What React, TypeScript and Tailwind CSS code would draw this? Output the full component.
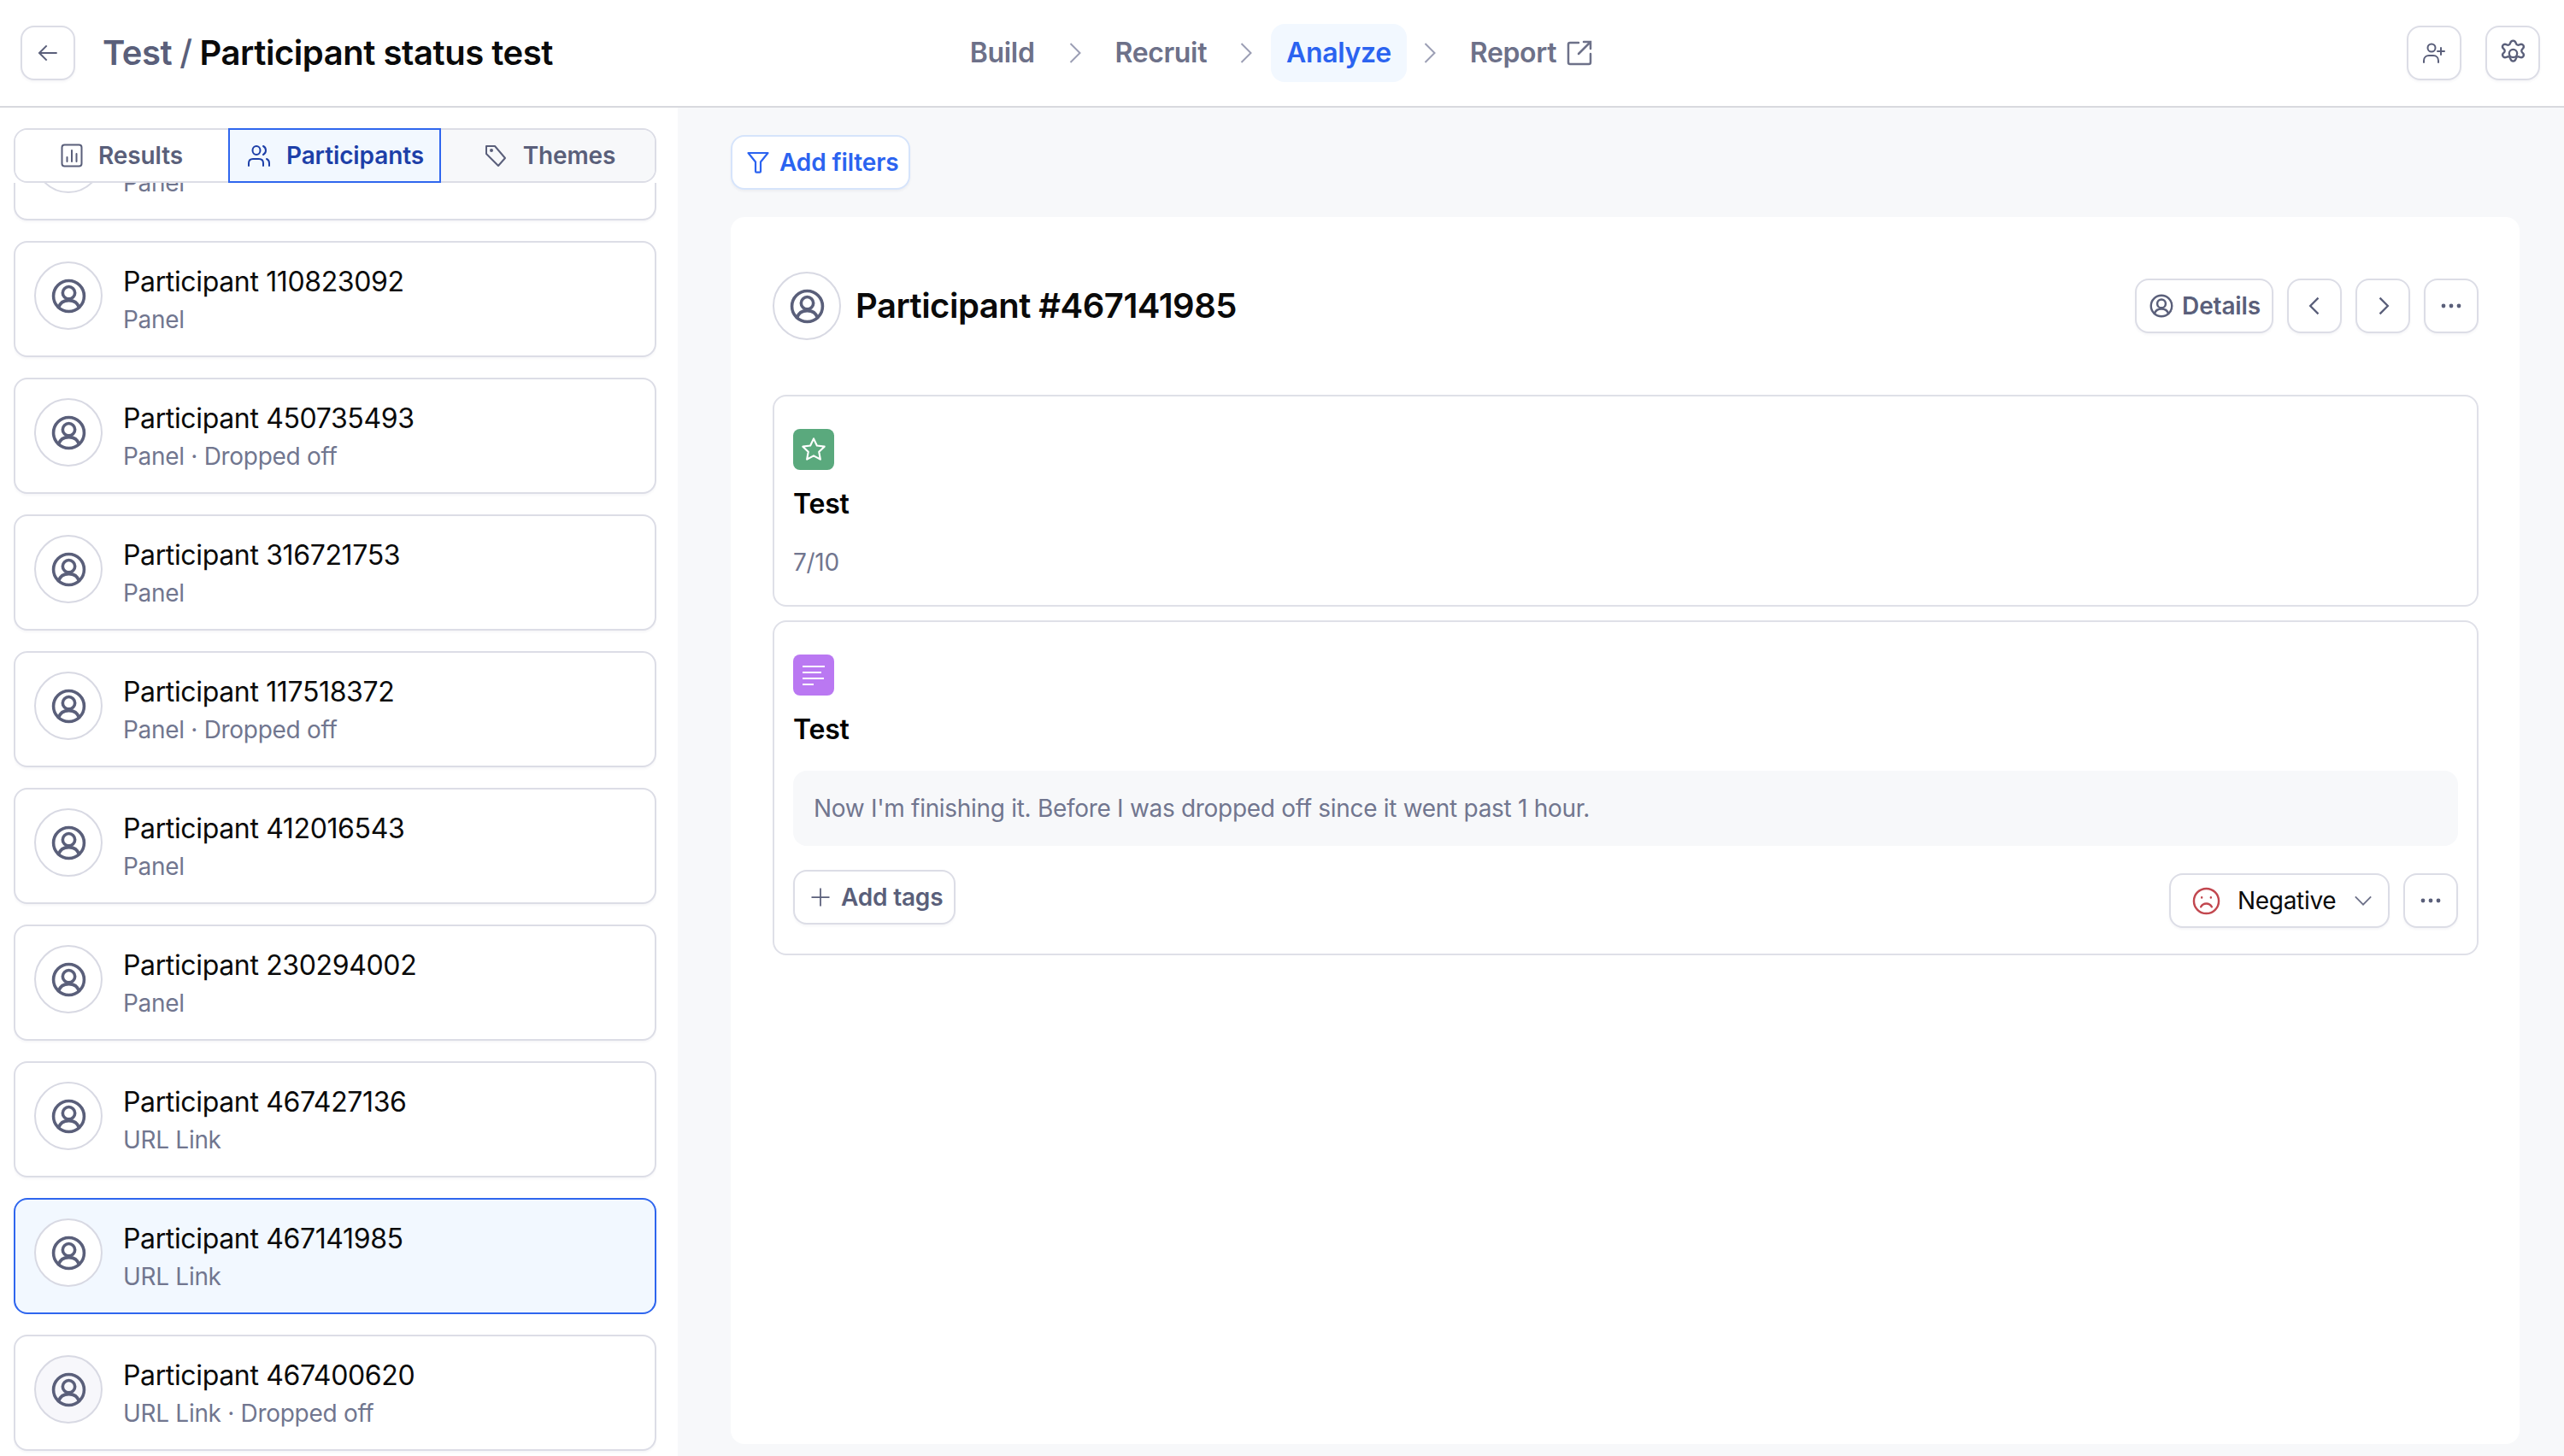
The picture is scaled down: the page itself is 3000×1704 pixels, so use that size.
import React from "react";

const Person = ({ className = "w-[41px] h-[41px]" }: { className?: string }) => (
  <svg viewBox="0 0 24 24" fill="none" stroke="currentColor" strokeWidth="2.100" strokeLinecap="round" strokeLinejoin="round" className={className}>
    <circle cx="12" cy="12" r="10.500" />
    <circle cx="12" cy="9.800" r="4.200" />
    <path d="M5 19.800c1-3.200 3.600-4.800 7-4.800s6 1.600 7 4.800" />
  </svg>
);

const Chevron = () => (
  <svg viewBox="0 0 14 24" fill="none" stroke="currentColor" strokeWidth="2" className="h-[24px] w-[14px] text-[#9b9eb4]">
    <path d="M1.500 1 L12.500 12 L1.500 23" />
  </svg>
);

const Dots = () => (
  <svg viewBox="0 0 24 24" fill="#5a5f7a" className="h-6 w-6">
    <circle cx="3" cy="12" r="2.400" />
    <circle cx="12" cy="12" r="2.400" />
    <circle cx="21" cy="12" r="2.400" />
  </svg>
);

const btn = "flex items-center justify-center rounded-[16px] border-2 border-[#dcdde6] bg-white shadow-[0_2px_3px_rgba(30,35,70,0.04)]";

function Card({ name, sub, active, gray }: { name: string; sub: string; active?: boolean; gray?: boolean }) {
  return (
    <div
      className={
        "flex h-[136px] shrink-0 items-start rounded-[16px] border-2 pl-[22px] pt-[22px] " +
        (active ? "border-[#2f66ee] bg-[#f2f8ff]" : "border-[#dcdde6] bg-white shadow-[0_2px_3px_rgba(30,35,70,0.04)]")
      }
    >
      <div className={"flex h-[80px] w-[80px] items-center justify-center rounded-full border-2 border-[#d8d9e3] text-[#5a5f7a] " + (active ? "bg-white" : gray ? "bg-[#f7f7fb]" : "bg-white")}>
        <Person />
      </div>
      <div className="ml-[24px] flex flex-col pt-[2px]">
        <span className="h-[44px] text-[32px] leading-[44px] tracking-[-0.36px] text-[#0a0a0a]">{name}</span>
        <span className="text-[28px] leading-[44px] tracking-[-0.3px] text-[#71768f]">{sub}</span>
      </div>
    </div>
  );
}

const rows = [
  ["Participant 110823092", "Panel"],
  ["Participant 450735493", "Panel · Dropped off"],
  ["Participant 316721753", "Panel"],
  ["Participant 117518372", "Panel · Dropped off"],
  ["Participant 412016543", "Panel"],
  ["Participant 230294002", "Panel"],
  ["Participant 467427136", "URL Link"],
  ["Participant 467141985", "URL Link"],
  ["Participant 467400620", "URL Link · Dropped off"],
];

export default function App() {
  return (
    <div className="flex h-[1704px] w-[3000px] flex-col overflow-hidden bg-[#f7f8fa] font-['Inter',sans-serif]">
      <header className="grid h-[126px] shrink-0 grid-cols-[1fr_auto_1fr] items-center border-b-2 border-[#d8d9de] bg-white pl-[24px] pr-[28px]">
        <div className="flex items-center">
          <button className={btn + " h-[64px] w-[64px] text-[#5a5f7a]"}>
            <svg viewBox="0 0 24 24" fill="none" stroke="currentColor" strokeWidth="1.500" className="h-8 w-8"><path d="M20 12H5M11 5.500 4.500 12l6.500 6.500" /></svg>
          </button>
          <div className="ml-[32px] text-[40px] font-semibold tracking-[-0.45px] text-[#0a0a0a]">
            <span className="text-[#5a5f7a]">Test<span className="mx-[9px] font-medium">/</span></span>Participant status test
          </div>
        </div>
        <nav className="flex items-center pl-[2px] text-[32px] font-semibold tracking-[-0.35px] text-[#6d7189]">
          <span>Build</span>
          <span className="mx-[40px] flex"><Chevron /></span>
          <span>Recruit</span>
          <span className="ml-[39px] mr-[22px] flex"><Chevron /></span>
          <span className="flex h-[68px] items-center rounded-[16px] bg-[#f2f8ff] px-[18px] text-[#2b63f0]">Analyze</span>
          <span className="ml-[20px] mr-[40px] flex"><Chevron /></span>
          <span>Report</span>
          <svg viewBox="0 0 30 30" fill="none" stroke="currentColor" strokeWidth="2.500" strokeLinecap="round" className="ml-[12px] h-[30px] w-[30px]">
            <path d="M14 3H4a2 2 0 0 0-2 2v21a2 2 0 0 0 2 2h22a2 2 0 0 0 2-2V16M14 16 28 2M20 2h8v8" />
          </svg>
        </nav>
        <div className="flex justify-end gap-[28px] text-[#5a5f7a]">
          <button className={btn + " h-[64px] w-[64px]"}>
            <svg viewBox="0 0 28 28" fill="none" stroke="currentColor" strokeWidth="2" strokeLinecap="round" className="h-7 w-7">
              <circle cx="11" cy="8" r="4.500" /><path d="M2 25v-2c0-4 3-6 6-6h5c4 0 6 3 6 6v2M22 8v8M18 12h8" />
            </svg>
          </button>
          <button className={btn + " h-[64px] w-[64px]"}>
            <svg viewBox="0 0 24 24" fill="none" stroke="currentColor" strokeWidth="1.600" strokeLinejoin="round" className="h-[35px] w-[35px]">
              <circle cx="12" cy="12" r="3.200" />
              <path d="M12 1.800c1.400 0 2 1 2.400 2.300.3 1 1.500 1.500 2.400 1 1.300-.6 2.500-.8 3.400.5.700 1.100.1 2.200-.9 3-.8.700-.8 2 0 2.700l.1.100c1 .8 1.500 1.800.8 2.900-.8 1.300-2 1.100-3.300.500-1-.5-2.200 0-2.500 1.100-.4 1.300-1 2.300-2.400 2.300s-2-1-2.400-2.300c-.3-1.100-1.500-1.600-2.500-1.100-1.300.6-2.500.8-3.300-.5-.7-1.100-.2-2.100.8-2.900.9-.7.900-2.100 0-2.800-1-.8-1.600-1.900-.9-3 .9-1.300 2.100-1.100 3.400-.5 1 .5 2.100 0 2.400-1 .4-1.300 1-2.300 2.400-2.300Z" />
            </svg>
          </button>
        </div>
      </header>

      <div className="flex min-h-0 flex-1">
        <aside className="flex w-[793px] shrink-0 flex-col overflow-hidden bg-white pl-[16px] pr-[25px] pt-[24px]">
          <div className="relative z-10 grid h-[64px] shrink-0 grid-cols-[249px_249px_1fr] rounded-[16px] border-2 border-[#dcdde6] text-[28px] font-semibold tracking-[-0.1px]">
            <div className="flex items-center justify-center gap-[18px] rounded-l-[14px] bg-white text-[#5a5f7a]">
              <svg viewBox="0 0 26 28" fill="none" stroke="currentColor" strokeWidth="2" strokeLinecap="round" className="h-7 w-[26px]">
                <rect x="1.500" y="1.500" width="23" height="25" rx="3" /><path d="M7.500 21v-5M13 21V8M18.500 21v-9" />
              </svg>
              Results
            </div>
            <div className="-my-[2px] flex items-center justify-center gap-[18px] border-2 border-[#2f66ee] bg-[#f2f8ff] pl-[2px] text-[#1d3fa8]">
              <svg viewBox="0 0 28 28" fill="none" stroke="#1d3fa8" strokeWidth="2" strokeLinecap="round" className="h-7 w-7">
                <ellipse cx="11" cy="8" rx="4.500" ry="5" /><path d="M2 26v-3c0-3 2-5 5-5h7c3 0 5 2 5 5v3M19 3c2 1 3 3 3 5s-1 4-3 5M23 18c2 .8 3 2.500 3 5v3" />
              </svg>
              Participants
            </div>
            <div className="flex items-center justify-center gap-[18px] rounded-r-[14px] bg-[#f7f8fa] pl-[4px] text-[#5a5f7a]">
              <svg viewBox="0 0 28 28" fill="none" stroke="currentColor" strokeWidth="2" strokeLinejoin="round" className="h-7 w-7">
                <path d="M3 3h10l12 14-8 9L3 12V3Z" /><circle cx="9" cy="8" r="1" />
              </svg>
              Themes
            </div>
          </div>
          <div className="min-h-0 flex-1 overflow-hidden">
            <div className="-mt-[92px] flex flex-col gap-[24px]">
              <Card name="" sub="Panel" />
              {rows.map(([n, s], i) => (
                <Card key={n} name={n} sub={s} active={i === 7} gray={i === 8} />
              ))}
            </div>
          </div>
        </aside>

        <main className="flex min-w-0 flex-1 flex-col pb-[14px] pl-[62px] pr-[52px] pt-[32px]">
          <button className="flex h-[64px] w-[210px] shrink-0 items-center gap-[12px] rounded-[16px] border-2 border-[#d6e4fb] bg-white pl-[17px] text-[28px] font-semibold tracking-[-0.1px] text-[#2b63f0] shadow-[0_2px_3px_rgba(30,35,70,0.05)]">
            <svg viewBox="0 0 26 26" fill="none" stroke="currentColor" strokeWidth="2.200" strokeLinejoin="round" className="h-[26px] w-[26px]"><path d="M1.500 2h23l-8.500 10.500V23.500a1.200 1.200 0 0 1-1.200 1.200h-3.600a1.200 1.200 0 0 1-1.200-1.200V12.500L1.500 2Z" /></svg>
            Add filters
          </button>
          <section className="mt-[32px] flex min-h-0 flex-1 flex-col rounded-[16px] bg-white pl-[49px] pr-[48px] pt-[64px]">
            <div className="flex h-[80px] shrink-0 items-center">
              <div className="flex h-[80px] w-[80px] items-center justify-center rounded-full border-2 border-[#d8d9e3] text-[#5a5f7a]">
                <Person />
              </div>
              <h1 className="ml-[17px] text-[40px] font-semibold tracking-[-0.5px] text-[#0a0a0a]">Participant #467141985</h1>
              <div className="ml-auto flex gap-[16px] text-[#5a5f7a]">
                <button className={btn + " h-[64px] w-[162px] gap-[10px] pl-[2px] text-[28px] font-semibold tracking-[-0.15px]"}><Person className="h-[28px] w-[28px]" />Details</button>
                <button className={btn + " h-[64px] w-[64px] pl-[2px]"}>
                  <svg viewBox="0 0 24 24" fill="none" stroke="currentColor" strokeWidth="2" className="h-7 w-7"><path d="M15 4 7 12l8 8" /></svg>
                </button>
                <button className={btn + " h-[64px] w-[64px]"}>
                  <svg viewBox="0 0 24 24" fill="none" stroke="currentColor" strokeWidth="2" className="h-7 w-7"><path d="m9 4 8 8-8 8" /></svg>
                </button>
                <button className={btn + " h-[64px] w-[64px]"}><Dots /></button>
              </div>
            </div>

            <div className="mt-[64px] flex h-[248px] shrink-0 flex-col rounded-[16px] border-2 border-[#dfe0e8] px-[22px] pt-[38px]">
              <div className="flex h-[48px] w-[48px] items-center justify-center rounded-[8px] bg-[#5aa97d]">
                <svg viewBox="0 0 24 24" fill="none" stroke="#fff" strokeWidth="1.600" strokeLinejoin="round" className="h-[32px] w-[32px]">
                  <path d="m12 2.500 2.900 6.100 6.600.9-4.800 4.600 1.200 6.600-5.900-3.200-5.900 3.200 1.200-6.600L2.500 9.500l6.600-.9L12 2.500Z" />
                </svg>
              </div>
              <div className="mt-[18px] text-[32px] font-semibold leading-[44px] tracking-[-0.2px] text-black">Test</div>
              <div className="mt-[24px] text-[28px] leading-[44px] tracking-[-0.3px] text-[#71768f]">7/10</div>
            </div>

            <div className="mt-[16px] flex h-[392px] shrink-0 flex-col rounded-[16px] border-2 border-[#dfe0e8] px-[22px] pt-[38px]">
              <div className="flex h-[48px] w-[48px] flex-col justify-center gap-[5px] rounded-[8px] bg-[#ba78f2] pl-[11px]">
                <span className="h-[2px] w-[26px] bg-white" />
                <span className="h-[2px] w-[22px] bg-white" />
                <span className="h-[2px] w-[25px] bg-white" />
                <span className="h-[2px] w-[13px] bg-white" />
              </div>
              <div className="mt-[18px] text-[32px] font-semibold leading-[44px] tracking-[-0.2px] text-black">Test</div>
              <div className="mt-[26px] flex h-[88px] items-center rounded-[16px] bg-[#f7f8fa] px-[24px] text-[28px] tracking-[-0.3px] text-[#71768f]">
                Now I'm finishing it. Before I was dropped off since it went past 1 hour.
              </div>
              <div className="mt-[28px] flex items-start justify-between">
                <button className={btn + " h-[64px] w-[190px] !justify-start gap-[10px] pl-[16px] text-[28px] font-semibold tracking-[-0.2px] text-[#5a5f7a]"}>
                  <svg viewBox="0 0 24 24" fill="none" stroke="currentColor" strokeWidth="1.500" className="h-[28px] w-[28px]"><path d="M12 3v18M3 12h18" /></svg>
                  Add tags
                </button>
                <div className="mt-[4px] flex gap-[16px]">
                  <button className={btn + " h-[64px] w-[258px] !justify-start pl-[25px] text-[28px] tracking-[-0.3px] text-[#0a0a0a]"}>
                    <svg viewBox="0 0 34 34" fill="none" stroke="#c2474f" strokeWidth="2.500" strokeLinecap="round" className="h-[33px] w-[33px]">
                      <circle cx="17" cy="17" r="15" /><path d="M10.500 24c1.500-3 3.500-4 6.500-4s5 1 6.500 4" /><path d="M11.500 12.500v.5M22.500 12.500v.5" />
                    </svg>
                    <span className="ml-[20px]">Negative</span>
                    <svg viewBox="0 0 24 24" fill="none" stroke="#6d7189" strokeWidth="2" className="ml-[21px] h-[22px] w-[22px]"><path d="m2 7 10 10 10-10" /></svg>
                  </button>
                  <button className={btn + " h-[64px] w-[64px]"}><Dots /></button>
                </div>
              </div>
            </div>
          </section>
        </main>
      </div>
    </div>
  );
}
